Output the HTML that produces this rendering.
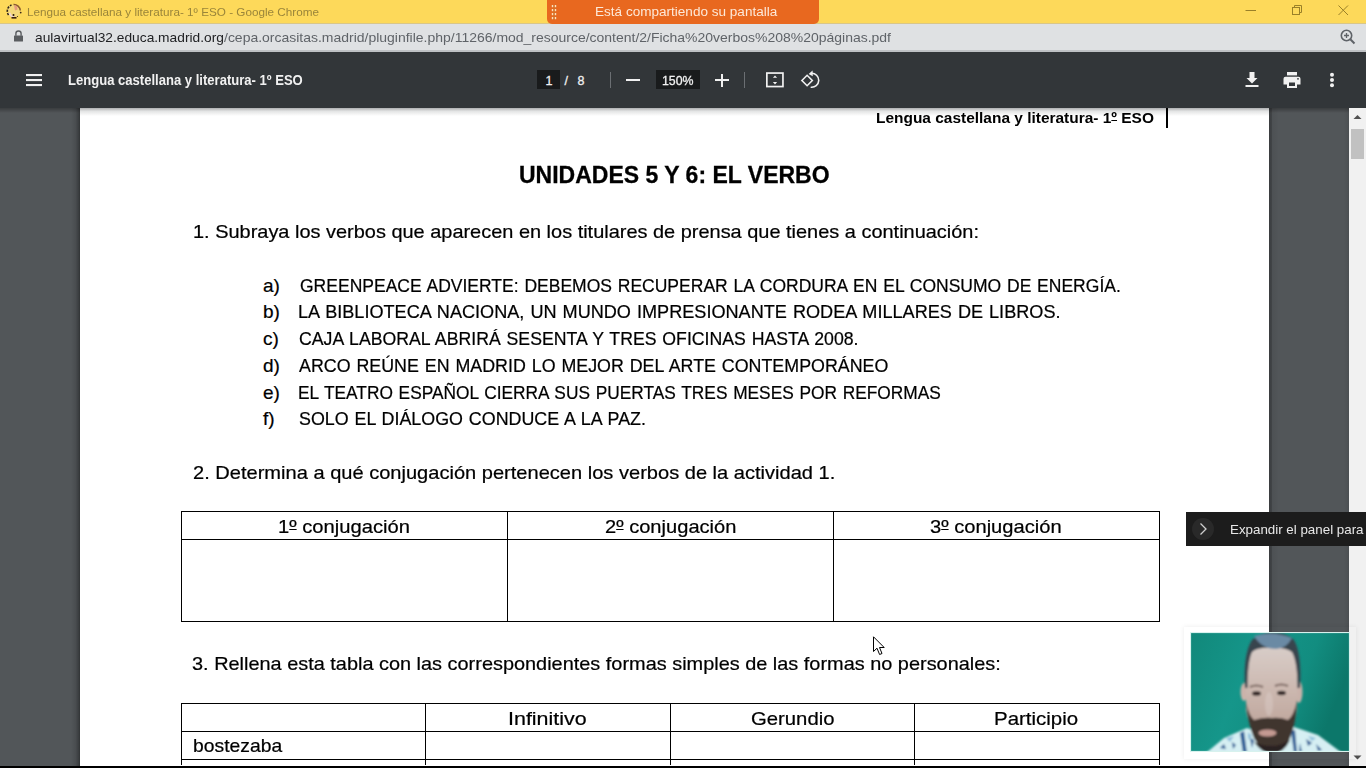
<!DOCTYPE html>
<html><head><meta charset="utf-8">
<style>
html,body{margin:0;padding:0}
body{width:1366px;height:768px;overflow:hidden;position:relative;background:#525659;font-family:"Liberation Sans",sans-serif}
.a{position:absolute}
.t{position:absolute;white-space:nowrap;line-height:80px;height:80px;transform-origin:0 0;font-family:"Liberation Sans",sans-serif}
</style></head><body>
<!-- title bar -->
<div class="a" style="left:0;top:0;width:1366px;height:23px;background:#fdd95a"></div>
<div class="a" style="left:0;top:23px;width:1366px;height:1px;background:#d9c688"></div>
<!-- favicon -->
<svg class="a" style="left:5px;top:2px" width="18" height="18" viewBox="0 0 18 18">
 <circle cx="9" cy="8.8" r="6.3" fill="#efd890" opacity="0.6"/>
 <path d="M3.6 13 A6.5 6.5 0 0 1 6.5 3" fill="none" stroke="#2e2418" stroke-width="1.6" stroke-dasharray="2.2 1.2"/>
 <path d="M8.5 2.5 A6.5 6.5 0 0 1 15.3 8.5" fill="none" stroke="#8a5a30" stroke-width="1.5"/>
 <path d="M9 3.5 L12 4 L12.5 7.5 L10 8.5Z" fill="#e69a80"/>
 <path d="M4.5 11 Q6 15 9 15" fill="none" stroke="#f0d8d0" stroke-width="2"/>
 <path d="M6.5 15.8 H11.5" stroke="#3a2010" stroke-width="1.6"/>
 <circle cx="8.5" cy="13" r="1" fill="#2a1a10"/>
 <circle cx="15.7" cy="10.6" r="0.9" fill="#3a2a18"/>
 <circle cx="12.5" cy="14.5" r="0.6" fill="#3a2a18"/>
</svg>
<!-- orange sharing tab -->
<div class="a" style="left:547px;top:0;width:272px;height:24px;background:#e8681f;border-radius:0 0 5px 5px"></div>
<svg class="a" style="left:550px;top:3px" width="8" height="18">
 <rect x="3.4" y="2" width="1.2" height="15" fill="#c07a30" opacity="0.7"/>
 <g fill="#fbe2c0"><rect x="1.8" y="2" width="1.4" height="2.2"/><rect x="1.8" y="6" width="1.4" height="2.2"/><rect x="1.8" y="10" width="1.4" height="2.2"/><rect x="1.8" y="14" width="1.4" height="2.2"/>
 <rect x="4.8" y="2" width="1.4" height="2.2"/><rect x="4.8" y="6" width="1.4" height="2.2"/><rect x="4.8" y="10" width="1.4" height="2.2"/><rect x="4.8" y="14" width="1.4" height="2.2"/></g>
</svg>
<!-- window controls -->
<svg class="a" style="left:1230px;top:0" width="136" height="23">
 <line x1="15.5" y1="10.5" x2="26" y2="10.5" stroke="#9a8028" stroke-width="1"/>
 <rect x="62.5" y="7.5" width="7" height="7" fill="none" stroke="#9a8028" stroke-width="1"/>
 <path d="M64.5 7.5 V5.5 H71.5 V12.5 H69.5" fill="none" stroke="#9a8028" stroke-width="1"/>
 <path d="M108.5 5.5 L118 15 M118 5.5 L108.5 15" stroke="#9a8028" stroke-width="1"/>
</svg>
<!-- address bar -->
<div class="a" style="left:0;top:24px;width:1366px;height:26px;background:#dfe1e3"></div>
<div class="a" style="left:0;top:50px;width:1366px;height:2px;background:#bec1c4"></div>
<svg class="a" style="left:12px;top:29px" width="14" height="14" viewBox="0 0 14 14">
 <path d="M3.9 6.8 V4.6 A2.6 2.6 0 0 1 9.1 4.6 V6.8" fill="none" stroke="#5a5d60" stroke-width="1.4"/>
 <rect x="2" y="6.5" width="9" height="6" rx="0.6" fill="#5a5d60"/>
</svg>
<svg class="a" style="left:1337px;top:27px" width="22" height="22" viewBox="0 0 22 22">
 <circle cx="9.5" cy="8.5" r="5.2" fill="none" stroke="#5f6368" stroke-width="1.6"/>
 <path d="M9.5 6 V11 M7 8.5 H12" stroke="#5f6368" stroke-width="1.3"/>
 <path d="M13.3 12.3 L17.5 16.5" stroke="#5f6368" stroke-width="2"/>
</svg>
<!-- pdf toolbar -->
<div class="a" style="left:0;top:52px;width:1366px;height:56px;background:#323639"></div>
<div class="a" style="left:0;top:108px;width:1366px;height:5px;background:linear-gradient(rgba(0,0,0,0.3),rgba(0,0,0,0))"></div>
<svg class="a" style="left:24px;top:70px" width="20" height="20">
 <rect x="2" y="4" width="16" height="2.1" fill="#f1f1f1"/><rect x="2" y="9" width="16" height="2.1" fill="#f1f1f1"/><rect x="2" y="14" width="16" height="2.1" fill="#f1f1f1"/>
</svg>
<div class="a" style="left:537px;top:70px;width:23px;height:19px;background:#191b1c"></div>
<div class="a" style="left:610px;top:72px;width:1px;height:16px;background:#6b6f73"></div>
<div class="a" style="left:626px;top:79.3px;width:13.5px;height:1.5px;background:#f1f1f1"></div>
<div class="a" style="left:656px;top:70px;width:44px;height:19px;background:#191b1c"></div>
<div class="a" style="left:715px;top:79.3px;width:13.5px;height:1.5px;background:#f1f1f1"></div>
<div class="a" style="left:721px;top:73.5px;width:1.5px;height:13px;background:#f1f1f1"></div>
<div class="a" style="left:744px;top:72px;width:1px;height:16px;background:#6b6f73"></div>
<svg class="a" style="left:764px;top:71px" width="22" height="18">
 <rect x="2.85" y="2.05" width="16.1" height="13.5" fill="none" stroke="#f1f1f1" stroke-width="1.7"/>
 <path d="M11 4.4 L8.9 6.8 H13.1Z M8.9 11.1 H13.1 L11 13.6Z" fill="#f1f1f1"/>
</svg>
<svg class="a" style="left:800px;top:69px" width="22" height="22" viewBox="0 0 22 22">
 <path d="M1.9 11.5 L7.1 6.3 L12.3 11.5 L7.1 16.7Z" fill="none" stroke="#f1f1f1" stroke-width="1.6"/>
 <path d="M11.2 4.3 A7 7 0 1 1 10.7 18.2" fill="none" stroke="#f1f1f1" stroke-width="1.6"/>
 <path d="M8.6 4.9 L12.6 1.4 L12.8 7.2Z" fill="#f1f1f1"/>
</svg>
<svg class="a" style="left:1240px;top:68px" width="24" height="24">
 <path d="M9.5 4 H14.5 V10 H17.5 L12 15.5 L6.5 10 H9.5Z" fill="#f1f1f1"/>
 <rect x="5.5" y="17" width="13" height="2" fill="#f1f1f1"/>
</svg>
<svg class="a" style="left:1280px;top:68px" width="24" height="24">
 <rect x="7" y="4" width="10" height="3.4" fill="#f1f1f1"/>
 <path d="M5.5 8.8 H18.5 A2 2 0 0 1 20.5 10.8 V16.5 H17 V20 H7 V16.5 H3.5 V10.8 A2 2 0 0 1 5.5 8.8Z" fill="#f1f1f1"/>
 <rect x="9" y="14.5" width="6" height="3.5" fill="#323639"/>
 <circle cx="18" cy="10.8" r="0.9" fill="#323639"/>
</svg>
<svg class="a" style="left:1322px;top:68px" width="20" height="24">
 <circle cx="10" cy="6.8" r="2" fill="#f1f1f1"/><circle cx="10" cy="12" r="2" fill="#f1f1f1"/><circle cx="10" cy="17.2" r="2" fill="#f1f1f1"/>
</svg>
<!-- page -->
<div class="a" style="left:71px;top:108px;width:9px;height:658px;background:linear-gradient(90deg,rgba(0,0,0,0) 0%,rgba(0,0,0,0.1) 50%,rgba(0,0,0,0.3) 88%,rgba(0,0,0,0.42) 100%)"></div>
<div class="a" style="left:1269px;top:108px;width:10px;height:658px;background:linear-gradient(90deg,rgba(0,0,0,0.3) 0%,rgba(0,0,0,0.22) 25%,rgba(0,0,0,0.06) 35%,rgba(0,0,0,0) 100%)"></div><div class="a" style="left:1344px;top:108px;width:5px;height:658px;background:linear-gradient(90deg,rgba(0,0,0,0),rgba(0,0,0,0.08))"></div>
<div class="a" style="left:80px;top:108px;width:1189px;height:658px;background:#fff"></div>
<div class="a" style="left:80px;top:108px;width:1189px;height:8px;background:linear-gradient(rgba(60,64,67,0.42),rgba(60,64,67,0.14) 40%,rgba(60,64,67,0) 100%)"></div>
<!-- scrollbar -->
<div class="a" style="left:1349px;top:108px;width:17px;height:658px;background:#f1f1f1"></div>
<svg class="a" style="left:1349px;top:108px" width="17" height="17"><path d="M4.5 11 L8.5 7 L12.5 11Z" fill="#505050"/></svg>
<div class="a" style="left:1351px;top:129px;width:13px;height:30px;background:#c1c1c1"></div>
<svg class="a" style="left:1349px;top:748px" width="17" height="17"><path d="M4.5 7.5 L8.5 11.5 L12.5 7.5Z" fill="#505050"/></svg>
<!-- doc content -->
<div class="a" style="left:1166px;top:108px;width:2px;height:20px;background:#000"></div>
<!-- table 1 -->
<div class="a" style="left:181px;top:511px;width:979px;height:1px;background:#000"></div>
<div class="a" style="left:181px;top:539px;width:979px;height:1px;background:#000"></div>
<div class="a" style="left:181px;top:621px;width:979px;height:1px;background:#000"></div>
<div class="a" style="left:181px;top:511px;width:1px;height:111px;background:#000"></div>
<div class="a" style="left:507px;top:511px;width:1px;height:111px;background:#000"></div>
<div class="a" style="left:833px;top:511px;width:1px;height:111px;background:#000"></div>
<div class="a" style="left:1159px;top:511px;width:1px;height:111px;background:#000"></div>
<!-- table 2 -->
<div class="a" style="left:181px;top:703px;width:979px;height:1px;background:#000"></div>
<div class="a" style="left:181px;top:731px;width:979px;height:1px;background:#000"></div>
<div class="a" style="left:181px;top:759px;width:979px;height:1px;background:#000"></div>
<div class="a" style="left:181px;top:703px;width:1px;height:62px;background:#000"></div>
<div class="a" style="left:425px;top:703px;width:1px;height:62px;background:#000"></div>
<div class="a" style="left:670px;top:703px;width:1px;height:62px;background:#000"></div>
<div class="a" style="left:914px;top:703px;width:1px;height:62px;background:#000"></div>
<div class="a" style="left:1159px;top:703px;width:1px;height:62px;background:#000"></div>
<div class="t" style="left:27.30px;top:-28.20px;font-size:11px;font-weight:400;color:#9a853a;transform:scaleX(1.0644);">Lengua castellana y literatura- 1º ESO - Google Chrome</div>
<div class="t" style="left:595.30px;top:-27.60px;font-size:12.5px;font-weight:400;color:#fde9d9;transform:scaleX(1.0840);">Está compartiendo su pantalla</div>
<div class="t" style="left:67.80px;top:39.60px;font-size:14px;font-weight:700;color:#f1f1f1;transform:scaleX(0.9325);">Lengua castellana y literatura- 1º ESO</div>
<div class="t" style="left:876.40px;top:78.00px;font-size:15.5px;font-weight:700;color:#000;transform:scaleX(0.9971);">Lengua castellana y literatura- 1<span style="text-decoration:underline;text-underline-offset:-3px;text-decoration-thickness:1.2px">º</span> ESO</div>
<div class="t" style="left:519.00px;top:135.30px;font-size:24px;font-weight:700;color:#000;transform:scaleX(0.9583);-webkit-text-stroke:0.3px #000">UNIDADES 5 Y 6: EL VERBO</div>
<div class="t" style="left:192.95px;top:191.80px;font-size:19px;font-weight:400;color:#000;transform:scaleX(1.0495);-webkit-text-stroke:0.22px #000">1. Subraya los verbos que aparecen en los titulares de prensa que tienes a continuación:</div>
<div class="t" style="left:299.50px;top:245.50px;font-size:19px;font-weight:400;color:#000;transform:scaleX(0.9217);-webkit-text-stroke:0.22px #000;word-spacing:1px">GREENPEACE ADVIERTE: DEBEMOS RECUPERAR LA CORDURA EN EL CONSUMO DE ENERGÍA.</div>
<div class="t" style="left:297.55px;top:271.70px;font-size:19px;font-weight:400;color:#000;transform:scaleX(0.9534);-webkit-text-stroke:0.22px #000;word-spacing:1px">LA BIBLIOTECA NACIONA, UN MUNDO IMPRESIONANTE RODEA MILLARES DE LIBROS.</div>
<div class="t" style="left:299.00px;top:298.70px;font-size:19px;font-weight:400;color:#000;transform:scaleX(0.9308);-webkit-text-stroke:0.22px #000;word-spacing:1px">CAJA LABORAL ABRIRÁ SESENTA Y TRES OFICINAS HASTA 2008.</div>
<div class="t" style="left:299.00px;top:325.60px;font-size:19px;font-weight:400;color:#000;transform:scaleX(0.9389);-webkit-text-stroke:0.22px #000;word-spacing:1px">ARCO REÚNE EN MADRID LO MEJOR DEL ARTE CONTEMPORÁNEO</div>
<div class="t" style="left:298.09px;top:352.80px;font-size:19px;font-weight:400;color:#000;transform:scaleX(0.9112);-webkit-text-stroke:0.22px #000;word-spacing:1px">EL TEATRO ESPAÑOL CIERRA SUS PUERTAS TRES MESES POR REFORMAS</div>
<div class="t" style="left:299.00px;top:379.10px;font-size:19px;font-weight:400;color:#000;transform:scaleX(0.9397);-webkit-text-stroke:0.22px #000;word-spacing:1px">SOLO EL DIÁLOGO CONDUCE A LA PAZ.</div>
<div class="t" style="left:192.50px;top:433.10px;font-size:19px;font-weight:400;color:#000;transform:scaleX(1.0557);-webkit-text-stroke:0.22px #000">2. Determina a qué conjugación pertenecen los verbos de la actividad 1.</div>
<div class="t" style="left:192.00px;top:624.10px;font-size:19px;font-weight:400;color:#000;transform:scaleX(1.0476);-webkit-text-stroke:0.22px #000">3. Rellena esta tabla con las correspondientes formas simples de las formas no personales:</div>
<div class="t" style="left:193.30px;top:706.30px;font-size:19px;font-weight:400;color:#000;transform:scaleX(1.0170);-webkit-text-stroke:0.22px #000">bostezaba</div>
<div class="t" style="left:34.70px;top:-2.30px;font-size:13.5px;font-weight:400;color:#202124;transform:scaleX(1.0189);">aulavirtual32.educa.madrid.org</div>
<div class="t" style="left:224.30px;top:-2.30px;font-size:13.5px;font-weight:400;color:#5f6368;transform:scaleX(1.0350);">/cepa.orcasitas.madrid/pluginfile.php/11266/mod_resource/content/2/Ficha%20verbos%208%20páginas.pdf</div>
<div class="t" style="left:262.90px;top:245.50px;font-size:19px;font-weight:400;color:#000;transform:scaleX(1.0000);-webkit-text-stroke:0.22px #000">a)</div>
<div class="t" style="left:262.90px;top:271.70px;font-size:19px;font-weight:400;color:#000;transform:scaleX(1.0000);-webkit-text-stroke:0.22px #000">b)</div>
<div class="t" style="left:262.90px;top:298.70px;font-size:19px;font-weight:400;color:#000;transform:scaleX(1.0000);-webkit-text-stroke:0.22px #000">c)</div>
<div class="t" style="left:262.90px;top:325.60px;font-size:19px;font-weight:400;color:#000;transform:scaleX(1.0000);-webkit-text-stroke:0.22px #000">d)</div>
<div class="t" style="left:262.90px;top:352.80px;font-size:19px;font-weight:400;color:#000;transform:scaleX(1.0000);-webkit-text-stroke:0.22px #000">e)</div>
<div class="t" style="left:262.90px;top:379.10px;font-size:19px;font-weight:400;color:#000;transform:scaleX(1.0000);-webkit-text-stroke:0.22px #000">f)</div>
<div class="t" style="left:278.24px;top:486.90px;font-size:19px;font-weight:400;color:#000;transform:scaleX(1.0626);-webkit-text-stroke:0.22px #000">1<span style="text-decoration:underline;text-underline-offset:-4px;text-decoration-thickness:1.3px">º</span> conjugación</div>
<div class="t" style="left:604.60px;top:486.80px;font-size:19px;font-weight:400;color:#000;transform:scaleX(1.0581);-webkit-text-stroke:0.22px #000">2<span style="text-decoration:underline;text-underline-offset:-4px;text-decoration-thickness:1.3px">º</span> conjugación</div>
<div class="t" style="left:930.30px;top:486.80px;font-size:19px;font-weight:400;color:#000;transform:scaleX(1.0597);-webkit-text-stroke:0.22px #000">3<span style="text-decoration:underline;text-underline-offset:-4px;text-decoration-thickness:1.3px">º</span> conjugación</div>
<div class="t" style="left:508.07px;top:678.70px;font-size:19px;font-weight:400;color:#000;transform:scaleX(1.1290);-webkit-text-stroke:0.22px #000">Infinitivo</div>
<div class="t" style="left:750.50px;top:678.70px;font-size:19px;font-weight:400;color:#000;transform:scaleX(1.0679);-webkit-text-stroke:0.22px #000">Gerundio</div>
<div class="t" style="left:994.32px;top:678.60px;font-size:19px;font-weight:400;color:#000;transform:scaleX(1.0753);-webkit-text-stroke:0.22px #000">Participio</div>
<div class="t" style="left:545.50px;top:40.50px;font-size:12.5px;font-weight:400;color:#f1f1f1;transform:scaleX(1.0000);-webkit-text-stroke:0.3px #f1f1f1">1</div>
<div class="t" style="left:564.50px;top:40.50px;font-size:12.5px;font-weight:400;color:#f1f1f1;transform:scaleX(1.0000);-webkit-text-stroke:0.3px #f1f1f1">/</div>
<div class="t" style="left:577.50px;top:40.50px;font-size:12.5px;font-weight:400;color:#f1f1f1;transform:scaleX(1.0000);-webkit-text-stroke:0.3px #f1f1f1">8</div>
<div class="t" style="left:661.70px;top:40.50px;font-size:12.5px;font-weight:400;color:#f1f1f1;transform:scaleX(0.9875);-webkit-text-stroke:0.3px #f1f1f1">150%</div>
<!-- tooltip -->
<div class="a" style="left:1186px;top:512px;width:180px;height:34px;background:#1c1c1c"></div>
<div class="a" style="left:1192px;top:518px;width:22px;height:22px;border-radius:50%;background:#292929"></div>
<svg class="a" style="left:1196px;top:520px" width="16" height="18"><path d="M4.5 3.5 L10 9 L4.5 14.5" fill="none" stroke="#cfcfcf" stroke-width="1.3"/></svg>
<div class="t" style="left:1230.30px;top:489.70px;font-size:13px;font-weight:400;color:#e8e8e8;transform:scaleX(1.0262);">Expandir el panel para</div>
<!-- webcam -->
<div class="a" style="left:1184px;top:627px;width:172px;height:132px;box-shadow:0 0 5px rgba(0,0,0,0.08)"></div>
<svg class="a" style="left:1190px;top:632px" width="160" height="120" viewBox="0 0 160 120">
 <defs>
  <linearGradient id="bg" x1="0" y1="0" x2="1" y2="0.3"><stop offset="0" stop-color="#11887a"/><stop offset="0.4" stop-color="#15968a"/><stop offset="0.75" stop-color="#128d80"/><stop offset="1" stop-color="#0c776a"/></linearGradient>
  <filter id="bl" x="-10%" y="-10%" width="120%" height="120%"><feGaussianBlur stdDeviation="1.1"/></filter>
  <linearGradient id="sk" x1="0" y1="0" x2="0" y2="1"><stop offset="0" stop-color="#dcd4d0"/><stop offset="0.5" stop-color="#cdbab2"/><stop offset="1" stop-color="#bba096"/></linearGradient>
 </defs>
 <rect x="0" y="0" width="160" height="120" fill="url(#bg)"/>
 <g filter="url(#bl)">
  <path d="M16 121 L34 106 L57 96 L70 101 L96 101 L104 95 L128 103 L152 121Z" fill="#d6eff3"/>
  <path d="M50 101 L53 121 L57 121 L54 99Z M101 99 L104 121 L107 121 L105 98Z M30 116 L34 112 L36 117Z M116 107 L122 111 L118 114Z M42 110 L46 113 L43 117Z M126 112 L132 118 L128 119Z M110 111 L112 120 L109 120Z M60 106 L62 116 L64 108Z" fill="#2f5e96"/>
  <path d="M36 106 L44 104 L40 110Z M118 104 L126 106 L122 109Z M58 100 L62 104 L58 108Z" fill="#8fc0dc"/>
  <ellipse cx="54" cy="60" rx="3.5" ry="9" fill="#cbb3aa"/>
  <ellipse cx="109" cy="60" rx="3.5" ry="11" fill="#c9b2aa"/>
  <path d="M56 34 Q56 2 82 1 Q108 2 108 34 L107 76 Q104 102 82 106 Q60 102 56 78Z" fill="url(#sk)"/>
  <ellipse cx="79" cy="72" rx="4" ry="12" fill="#e2d8d4" opacity="0.35"/>
  <path d="M55 56 Q53 22 62 8 Q72 0 82 0 Q96 0 104 8 Q112 22 110 56 L107.5 56 Q107.5 30 102 20 Q94 15 82 16 Q68 15 62 20 Q57.5 30 57.5 56Z" fill="#38444e"/>
  <path d="M64 4 Q82 -2 102 6 Q96 17 86 17 Q72 17 64 4Z" fill="#6a8aa4"/>
  <path d="M60 55 Q66 52 73 55" fill="none" stroke="#7a6660" stroke-width="2"/>
  <path d="M85 54 Q91 51 98 54" fill="none" stroke="#7a6660" stroke-width="2"/>
  <ellipse cx="66.5" cy="61.5" rx="4.5" ry="2.2" fill="#2e2420"/>
  <ellipse cx="91.5" cy="61" rx="4.5" ry="2.2" fill="#2e2420"/>
  <path d="M56 70 Q58 92 64 106 Q72 121 82 122 Q94 121 100 106 Q106 92 107 68 Q104 84 98 88 Q90 85 82 86 Q74 85 64 88 Q59 84 56 70Z" fill="#41342f"/>
  <path d="M64 110 Q72 121 82 122 Q94 121 100 108 Q90 114 82 114 Q72 114 64 110Z" fill="#2a2220"/>
  <ellipse cx="77.5" cy="101" rx="9" ry="3.4" fill="#c49a92"/>
 </g>
 <rect x="0.5" y="0.5" width="159" height="119" fill="none" stroke="#d8f2ee" stroke-width="1.2"/>
</svg>
<!-- mouse cursor -->
<svg class="a" style="left:872px;top:636px" width="14" height="21" viewBox="0 0 14 21">
 <path d="M1.5 0.8 V15.5 L5 12.2 L7.6 18.5 L10 17.5 L7.5 11.5 H12.2Z" fill="#fff" stroke="#000" stroke-width="1"/>
</svg>
<!-- bottom black bar -->
<div class="a" style="left:0;top:766px;width:1366px;height:2px;background:#000"></div>
</body></html>
